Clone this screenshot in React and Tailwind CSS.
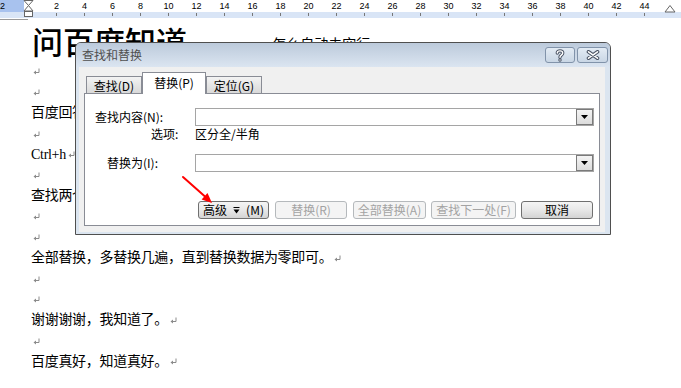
import React from "react";

const nums = Array.from({ length: 22 }, (_, i) => (i + 1) * 2);

const lines = [
  "",
  "",
  "百度回答：用查找替换功能。",
  "",
  "Ctrl+h",
  "",
  "查找两个段落标记，替换为一个段落标记。",
  "",
  "",
  "全部替换，多替换几遍，直到替换数据为零即可。",
  "",
  "",
  "谢谢谢谢，我知道了。",
  "",
  "百度真好，知道真好。",
];

function ParaMark() {
  return (
    <svg width="7" height="7" viewBox="0 0 7 7" className="ml-[2px] shrink-0">
      <path d="M6 0.5 V4.5 H2" stroke="#8a8a8a" strokeWidth="1" fill="none" />
      <path d="M3 2.5 L0.5 4.5 L3 6.5 Z" fill="#8a8a8a" />
    </svg>
  );
}

function Ruler() {
  return (
    <div>
      <div className="relative h-[18px]">
        <div className="flex h-[12px]">
          <div className="w-[24px] bg-[#a8c2ee] font-['Liberation_Sans',sans-serif] text-[9px] leading-[12px] text-black">
            <span>2</span>
          </div>
          <div className="flex pl-[18.5px] font-['Liberation_Sans',sans-serif] text-[9px] leading-[12px] text-black">
            {nums.map((n) => (
              <div key={n} className="w-[28px] text-center">
                {n}
              </div>
            ))}
          </div>
        </div>
        <div className="flex h-[6px] bg-[#d9e5f6] pl-[42.5px]">
          {nums.map((n) => (
            <div key={n} className="flex w-[28px] justify-center">
              <div className="mt-[1px] h-[3px] w-px bg-[#777]" />
            </div>
          ))}
        </div>
        {/* indent markers */}
        <svg width="11" height="18" viewBox="0 0 11 18" className="absolute left-[23px] top-0">
          <path d="M1 0.5 H10 L5.5 5.5 Z" fill="#fff" stroke="#666" strokeWidth="1" />
          <path d="M5.5 5.5 L10 11 H1 Z" fill="#fff" stroke="#666" strokeWidth="1" />
          <rect x="1.5" y="11.5" width="8" height="5" fill="#fff" stroke="#666" strokeWidth="1" />
        </svg>
        <svg width="12" height="8" viewBox="0 0 12 8" className="absolute left-[664px] top-[5px]">
          <path d="M6 0.5 L11 7 H1 Z" fill="#fff" stroke="#666" strokeWidth="1" />
        </svg>
      </div>
      <div className="flex h-[2px] items-end">
        <div className="h-px w-[28px] bg-[#9a9a9a]" />
      </div>
    </div>
  );
}

function Combo() {
  return (
    <div className="flex h-[18px] w-[399px] items-stretch justify-end border border-[#a5a5a5] bg-white">
      <div className="flex w-[17px] items-center justify-center border border-[#7a7a7a] bg-gradient-to-b from-[#f4f4f4] to-[#dcdcdc]">
        <svg width="7" height="4" viewBox="0 0 7 4">
          <path d="M0 0 H7 L3.5 4 Z" fill="#000" />
        </svg>
      </div>
    </div>
  );
}

function Btn({ children, disabled, className = "" }) {
  return (
    <div
      className={
        "flex h-[18px] items-center justify-center rounded-[3px] border leading-[14px] " +
        (disabled
          ? "border-[#b5b9bc] bg-[#f4f4f4] text-[#a3a3a3] "
          : "border-[#707070] bg-gradient-to-b from-[#f5f5f5] via-[#e8e8e8] to-[#d4d4d4] text-black ") +
        className
      }
    >
      {children}
    </div>
  );
}

function Dialog() {
  return (
    <div className="absolute left-[75px] top-[42px] flex h-[193px] w-[536px] flex-col rounded-t-[6px] border border-[#4f4f4f] bg-[#dbe5f0] font-['Noto_Sans_CJK_SC',sans-serif] text-[12px] text-black">
      {/* title bar */}
      <div className="flex h-[24px] items-start rounded-t-[5px] bg-gradient-to-b from-[#bccadb] to-[#dbe5f1] pl-[6px] pr-[2px]">
        <span className="mt-[5px] leading-[14px] text-[#505050]">查找和替换</span>
        <div className="ml-auto mt-[4px] flex gap-[2px]">
          <div className="flex h-[16px] w-[30px] items-center justify-center rounded-[3px] border border-[#8193aa] bg-gradient-to-b from-[#e3ebf4] to-[#c9d6e5]">
            <svg width="10" height="13" viewBox="0 0 10 13">
              <path d="M2.3 4 C2.3 1.2 7.7 1.2 7.7 4 C7.7 6.2 5 6 5 8.2" stroke="#4a5364" strokeWidth="3.4" fill="none" strokeLinecap="round" />
              <circle cx="5" cy="11" r="1.7" fill="#4a5364" />
              <path d="M2.3 4 C2.3 1.2 7.7 1.2 7.7 4 C7.7 6.2 5 6 5 8.2" stroke="#fff" strokeWidth="1.4" fill="none" strokeLinecap="round" />
              <circle cx="5" cy="11" r="0.7" fill="#fff" />
            </svg>
          </div>
          <div className="flex h-[16px] w-[31px] items-center justify-center rounded-[3px] border border-[#8193aa] bg-gradient-to-b from-[#e3ebf4] to-[#c9d6e5]">
            <svg width="14" height="10" viewBox="0 0 14 10">
              <path d="M2.5 1.8 L11.5 8.2 M11.5 1.8 L2.5 8.2" stroke="#4a5364" strokeWidth="3.6" strokeLinecap="round" />
              <path d="M2.5 1.8 L11.5 8.2 M11.5 1.8 L2.5 8.2" stroke="#fff" strokeWidth="1.6" strokeLinecap="round" />
            </svg>
          </div>
        </div>
      </div>

      {/* client area */}
      <div className="mb-[2px] ml-[3px] mr-[5px] flex flex-1 flex-col bg-[#f0f0f0] px-[5px] pt-[5px]">
        <div className="relative z-10 flex h-[21px] items-end pl-[2px] leading-[14px]">
          <div className="flex h-[17px] w-[56px] items-center justify-center border border-b-0 border-[#898c95] bg-gradient-to-b from-[#f3f3f3] to-[#d9d9d9] pt-[1px]">
            查找(D)
          </div>
          <div className="-mb-px flex h-[22px] w-[64px] items-start justify-center border border-b-0 border-[#898c95] bg-white pt-[3px]">
            替换(P)
          </div>
          <div className="flex h-[17px] w-[56px] items-center justify-center border border-b-0 border-[#898c95] bg-gradient-to-b from-[#f3f3f3] to-[#d9d9d9] pt-[1px]">
            定位(G)
          </div>
        </div>

        <div className="flex h-[133px] flex-col border border-[#898c95] bg-white leading-[14px]">
          <div className="mt-[14px] flex items-center">
            <div className="w-[110px] pl-[10px]">查找内容(N):</div>
            <Combo />
          </div>
          <div className="mt-[1px] flex h-[14px] items-center">
            <div className="w-[110px] pl-[66px]">选项:</div>
            <div>区分全/半角</div>
          </div>
          <div className="mt-[13px] flex items-center">
            <div className="w-[110px] pl-[22px]">替换为(I):</div>
            <Combo />
          </div>
          <div className="mt-[29px] flex pl-[113px]">
            <Btn className="w-[71px] gap-[6px]">
              <span>高级</span>
              <svg width="7" height="7" viewBox="0 0 7 7">
                <rect x="0.5" y="0" width="6" height="1" fill="#000" />
                <path d="M0.5 2.5 H6.5 L3.5 6.5 Z" fill="#000" />
              </svg>
              <span>(M)</span>
            </Btn>
            <Btn disabled className="ml-[6px] w-[72px]">替换(R)</Btn>
            <Btn disabled className="ml-[6px] w-[73px]">全部替换(A)</Btn>
            <Btn disabled className="ml-[5px] w-[85px]">查找下一处(F)</Btn>
            <Btn className="ml-[5px] w-[72px]">取消</Btn>
          </div>
        </div>
      </div>
    </div>
  );
}

export default function App() {
  return (
    <div className="relative h-[388px] w-[681px] overflow-hidden bg-white font-['Liberation_Serif','Noto_Sans_CJK_SC',serif] text-black">
      <Ruler />

      {/* document */}
      <div className="flex h-[41.65px] items-start pl-[32px]">
        <span className="font-['Noto_Sans_CJK_SC',serif] text-[31px] font-medium leading-[41.65px]">问百度知道</span>
        <span className="ml-[68px] mt-[13px] font-['Noto_Sans_CJK_SC',sans-serif] text-[14px] leading-[20px]">· 怎么自动去空行</span>
      </div>
      {lines.map((t, i) => (
        <div key={i} className="flex h-[20.71px] items-center pl-[31px] text-[14px] tracking-[-0.3px]">
          {t && <span className="leading-[20px]">{t}</span>}
          <ParaMark />
        </div>
      ))}

      <Dialog />

      {/* red arrow */}
      <svg width="40" height="36" viewBox="0 0 40 36" className="absolute left-[180px] top-[174px]">
        <path d="M3 3 L25 22.5" stroke="#ff0000" strokeWidth="2" strokeLinecap="round" />
        <path d="M32 29 L21.6 25.6 L27.5 19 Z" fill="#ff0000" />
      </svg>
    </div>
  );
}
